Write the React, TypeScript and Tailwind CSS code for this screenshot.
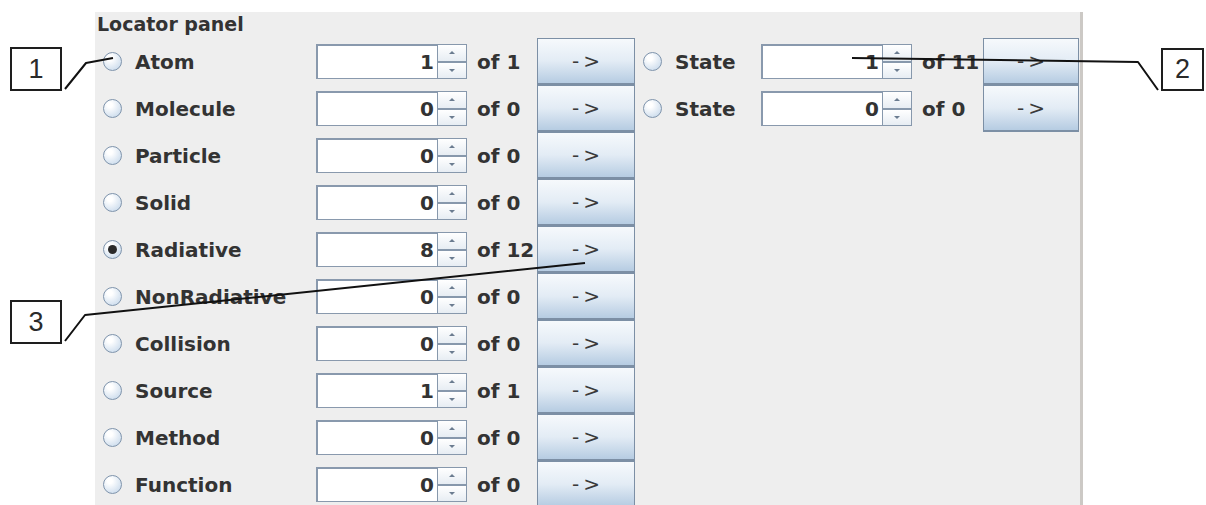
import React from "react";

type Row = { label: string; value: number; total: number; selected?: boolean };

const primaryRows: Row[] = [
  { label: "Atom", value: 1, total: 1 },
  { label: "Molecule", value: 0, total: 0 },
  { label: "Particle", value: 0, total: 0 },
  { label: "Solid", value: 0, total: 0 },
  { label: "Radiative", value: 8, total: 12, selected: true },
  { label: "NonRadiative", value: 0, total: 0 },
  { label: "Collision", value: 0, total: 0 },
  { label: "Source", value: 1, total: 1 },
  { label: "Method", value: 0, total: 0 },
  { label: "Function", value: 0, total: 0 },
];

const stateRows: Row[] = [
  { label: "State", value: 1, total: 11 },
  { label: "State", value: 0, total: 0 },
];

function Radio({ checked }: { checked?: boolean }) {
  return (
    <span className="flex h-[19px] w-[19px] shrink-0 items-center justify-center rounded-full border border-[#7f94ac] bg-[radial-gradient(circle_at_35%_30%,#ffffff_15%,#bfd3e8)]">
      {checked && <span className="h-[9px] w-[9px] rounded-full bg-[#2a2a2a]" />}
    </span>
  );
}

function Spinner({ value, width }: { value: number; width: string }) {
  return (
    <div className="flex h-[35px] shrink-0">
      <div className={`flex h-full items-center justify-end border-t-2 border-l-2 border-b border-[#8999ad] bg-white pr-[3px] ${width}`}>
        <span className="text-[20px] font-bold leading-none text-[#333]">{value}</span>
      </div>
      <div className="flex h-full w-[30px] flex-col border border-[#8798ac]">
        <div className="flex flex-1 items-center justify-center border-b-2 border-[#8798ac] bg-linear-to-b from-white to-[#e7edf3]">
          <span className="h-0 w-0 border-x-[3px] border-b-[3px] border-x-transparent border-b-[#6b7c90]" />
        </div>
        <div className="flex flex-1 items-center justify-center bg-linear-to-b from-white to-[#e7edf3]">
          <span className="h-0 w-0 border-x-[3px] border-t-[3px] border-x-transparent border-t-[#6b7c90]" />
        </div>
      </div>
    </div>
  );
}

function GoButton({ width }: { width: string }) {
  return (
    <button
      type="button"
      className={`flex h-[47px] shrink-0 items-center justify-center border border-b-2 border-[#7c8fa5] bg-linear-to-b from-[#f6f9fc] via-[#e3ecf5] to-[#b6cce2] font-['DejaVu_Sans',sans-serif] text-[20px] tracking-[4px] text-[#3a3a3a] ${width}`}
    >
      <span className="pl-[4px]">-&gt;</span>
    </button>
  );
}

function LocatorRow({
  row,
  labelWidth,
  countWidth,
  buttonWidth,
}: {
  row: Row;
  labelWidth: string;
  countWidth: string;
  buttonWidth: string;
}) {
  return (
    <div className="flex h-[47px] items-center pl-[8px]">
      <Radio checked={row.selected} />
      <span className={`ml-[13px] shrink-0 text-[20px] font-bold text-[#333] ${labelWidth}`}>{row.label}</span>
      <Spinner value={row.value} width="w-[121px]" />
      <span className={`shrink-0 pl-[10px] text-[20px] font-bold text-[#333] ${countWidth}`}>of {row.total}</span>
      <GoButton width={buttonWidth} />
    </div>
  );
}

function Callout({ n, className }: { n: number; className: string }) {
  return (
    <div
      className={`absolute flex items-center justify-center border-2 border-[#1e1e1e] bg-white font-['Liberation_Sans',sans-serif] text-[27px] font-normal text-[#2a2a2a] ${className}`}
    >
      {n}
    </div>
  );
}

export default function App() {
  return (
    <div className="relative h-[505px] w-[1206px] overflow-hidden bg-white font-['DejaVu_Sans',sans-serif]">
      <div className="flex h-full">
        <div className="w-[95px] shrink-0" />
        <section className="mt-[12px] w-[988px] shrink-0 border-r-[3px] border-[#ccc9c5] bg-[#eeeeee]">
          <h2 className="h-[26px] pl-[2px] text-[19px] font-bold leading-[24px] text-[#333]">Locator panel</h2>
          <div className="flex">
            <div className="w-[540px] shrink-0">
              {primaryRows.map((row) => (
                <LocatorRow
                  key={row.label}
                  row={row}
                  labelWidth="w-[181px]"
                  countWidth="w-[70px]"
                  buttonWidth="w-[98px]"
                />
              ))}
            </div>
            <div className="w-[443px] shrink-0">
              {stateRows.map((row, i) => (
                <LocatorRow
                  key={i}
                  row={row}
                  labelWidth="w-[86px]"
                  countWidth="w-[71px]"
                  buttonWidth="w-[96px]"
                />
              ))}
            </div>
          </div>
        </section>
      </div>

      {/* numbered leader lines laid over the panel */}
      <svg className="pointer-events-none absolute left-0 top-0" width={1206} height={505}>
        <g fill="none" stroke="#111" strokeWidth={2} strokeLinejoin="round">
          <polyline points="65,89 86,63 113,58" />
          <polyline points="852,58 1138,62 1158,90" />
          <polyline points="65,341 85,315 585,263" />
        </g>
      </svg>
      <Callout n={1} className="left-[10px] top-[47px] h-[44px] w-[52px]" />
      <Callout n={2} className="left-[1161px] top-[48px] h-[43px] w-[43px]" />
      <Callout n={3} className="left-[10px] top-[300px] h-[44px] w-[52px]" />
    </div>
  );
}
